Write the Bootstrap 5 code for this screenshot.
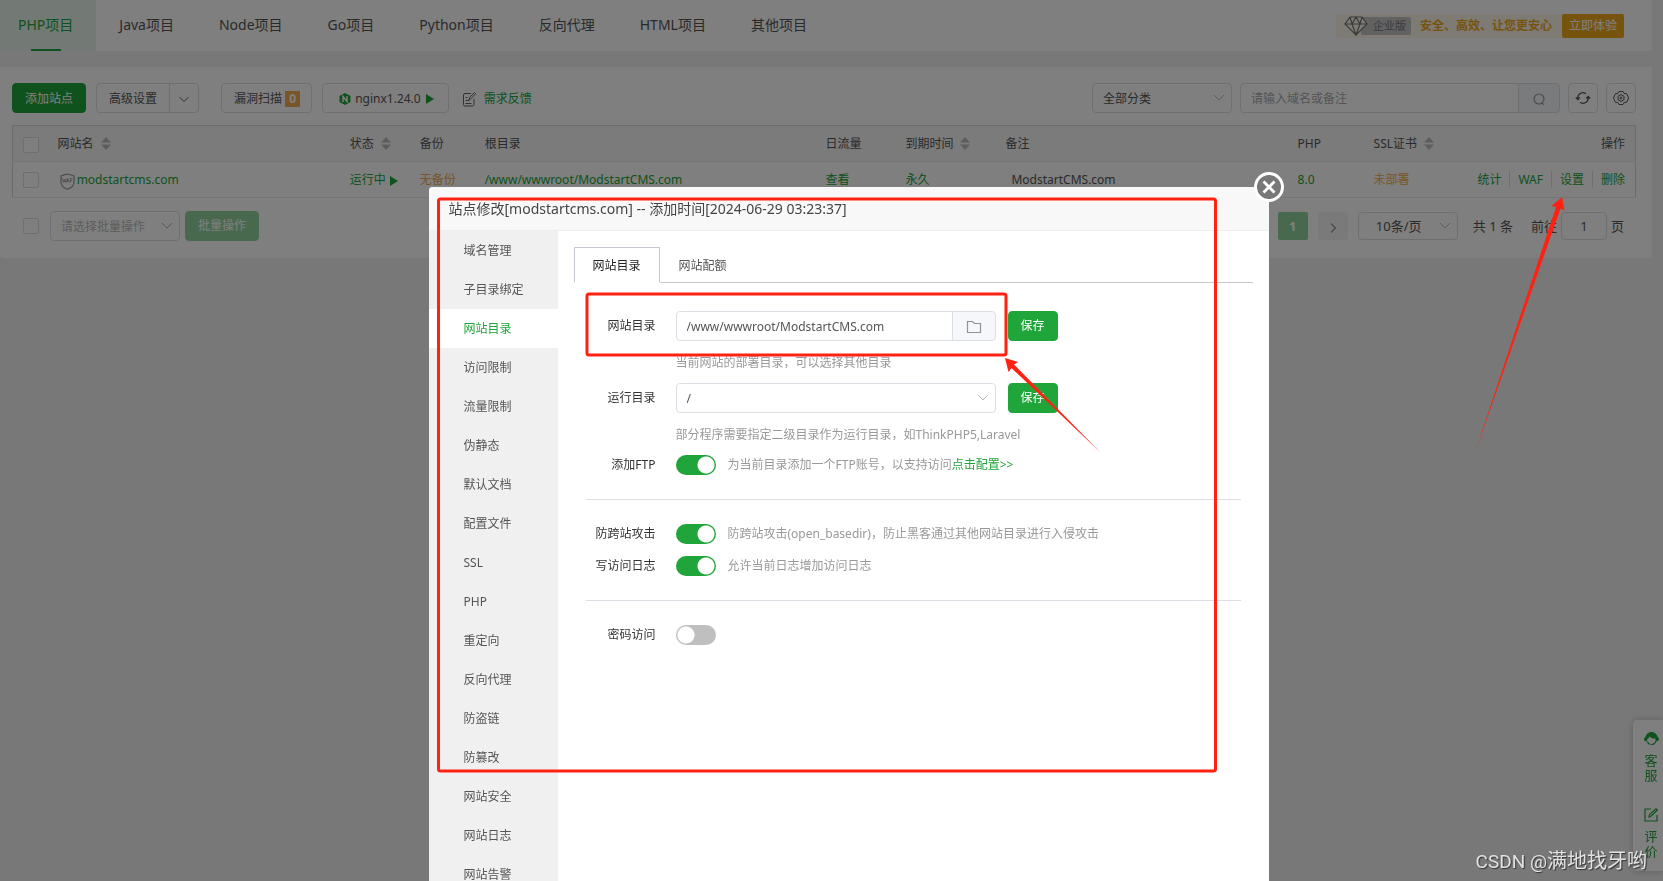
<!DOCTYPE html>
<html lang="zh-CN">
<head>
<meta charset="utf-8">
<meta name="viewport" content="width=device-width, initial-scale=1">
<title>网站管理</title>
<link href="https://cdn.jsdelivr.net/npm/bootstrap@5.3.0/dist/css/bootstrap.min.css" rel="stylesheet">
<style>
:root{--brand:#20a53a;--line:#dcdfe6;--warn:#f0ad4e;}
html,body{height:100%;}
body{font-family:"Noto Sans","Noto Sans CJK SC",sans-serif;font-size:12px;line-height:18px;color:#555;background:#f0f0f0;overflow:hidden;}
a{color:var(--brand);text-decoration:none;}
.page-wrap{padding-right:11px;}
.panel{background:#fff;border-radius:0 0 4px 4px;}
.top-nav{height:51px;}
.top-nav .nav-link{color:#555;font-size:14px;line-height:20px;padding:15px 22px 16px 23px;}
.top-nav .nav-link.active{color:var(--brand);background:#e6f3e8;position:relative;padding-left:18px;padding-right:23px;}
.top-nav .nav-link.active::after{content:"";position:absolute;left:31px;bottom:0;width:30px;height:2px;background:var(--brand);}
.promo{background:#fdf6ea;height:24px;margin-right:28px;border-radius:2px;}
.promo-tag{background:#c4c4c4;color:#777;height:18px;line-height:18px;font-size:11px;padding:0 5px 0 12px;margin-left:-7px;border-radius:2px;}
.promo-text{color:#efa91d;font-weight:700;margin:0 10px 0 9px;}
.btn{--bs-btn-font-size:12px;--bs-btn-line-height:18px;--bs-btn-padding-y:5px;--bs-btn-padding-x:12px;--bs-btn-border-radius:4px;}
.btn-brand{--bs-btn-bg:var(--brand);--bs-btn-color:#fff;--bs-btn-border-color:var(--brand);--bs-btn-hover-bg:#1b9132;--bs-btn-hover-color:#fff;}
.btn-soft{--bs-btn-bg:#90d29d;--bs-btn-color:#fff;--bs-btn-border-color:#90d29d;}
.btn-line{--bs-btn-bg:#fff;--bs-btn-color:#555;--bs-btn-border-color:var(--line);}
.btn-gold{--bs-btn-bg:#efa91d;--bs-btn-color:#fff;--bs-btn-padding-y:2px;--bs-btn-padding-x:6px;--bs-btn-border-radius:2px;}
.btn-square{width:30px;height:30px;padding:0;display:inline-flex;align-items:center;justify-content:center;}
.count-tag{background:var(--warn);color:#fff;font-weight:700;width:15px;height:16px;line-height:16px;display:inline-block;text-align:center;}
.form-control,.form-select{font-size:12px;line-height:18px;padding:6px 10px 4px;border-color:var(--line);border-radius:4px;color:#555;}
.form-control::placeholder{color:#aaa;}
.form-select{background-image:url("data:image/svg+xml,%3csvg xmlns='http://www.w3.org/2000/svg' viewBox='0 0 12 12'%3e%3cpath fill='none' stroke='%23b4b7bd' d='M1 3l5 5 5-5'/%3e%3c/svg%3e");background-position:right 6px center;background-size:12px 12px;}
.form-select.muted:disabled{background-color:#fff;color:#bbb;}
.list-pad{padding:16px 16px 17px 12px;}
.tool-row .btn:not(.btn-square):not(.search-btn){padding-top:6px;padding-bottom:4px;}
.adv-group{margin-left:10px;}
.scan-btn{margin-left:22px;padding-right:11px;}
.nginx-btn{margin-left:10px;padding-left:16px;padding-right:14px;}
.feedback{margin-left:14px;padding-top:2px;}
.cat-select{width:140px;}
.search-group{width:320px;}
.search-btn{width:42px;padding:0;background:#f5f7fa;}
.site-table{table-layout:fixed;border:1px solid #d6d6d6;font-size:12px;margin:12px 0 13px;--bs-table-color:#555;--bs-table-bg:transparent;}
.site-table>:not(caption)>*>*{padding:9px 10px 8px;border-color:#ebebeb;line-height:18px;font-weight:400;white-space:nowrap;}
.site-table thead{background:#f6f6f6;}
.site-table .orange{color:var(--warn);}
.site-table .form-check-input{margin-top:1px;}
.form-check-input{width:16px;height:16px;margin:0;border-color:var(--line);border-radius:2px!important;display:block;box-shadow:none;}
.sorter{display:inline-block;margin-left:7px;vertical-align:-2px;}
.waf{vertical-align:-4px;margin:-2px -1px -2px 2px;}
.note-text{padding-left:6px;}
.ops a+a{border-left:1px solid #ddd;margin-left:8px;padding-left:8px;}
.batch{padding-left:11px;}
.batch-select{width:130px;margin:0 5px 0 11px;}
.pager{font-size:13px;}
.pager .form-select,.pager .form-control,.pager .btn{font-size:13px;height:28px;padding-top:3px;padding-bottom:3px;}
.pager .btn{width:30px;padding:0;border-radius:2px;border:0;}
.pager .next-btn{background:#f4f4f4;margin:0 10px;}
.page-size{width:100px;padding-left:17px;}
.page-jump{width:46px;text-align:center;}
.total{margin:0 18px 0 15px;}
.jump-label{margin-right:4px;}
.side-tools{position:fixed;right:0;bottom:10px;width:30px;height:151px;background:#fff;border-radius:4px 0 0 4px;box-shadow:0 0 6px rgba(0,0,0,.2);z-index:10;padding:12px 2px 0 8px;font-size:13px;line-height:15px;text-align:center;}
.side-tools a{display:block;width:20px;margin-bottom:25px;}
.side-tools svg{display:block;margin:0 auto 7px;}
.side-tools span{display:block;width:13px;margin:0 auto;}
/* site dialog */
.modal-backdrop{height:100%;width:100%;}
.site-modal{overflow:hidden;padding-left:34px;}
.site-modal .modal-dialog{max-width:840px;margin:187px auto 0;}
.site-modal .modal-content{border:0;border-radius:4px;color:#555;}
.site-modal .modal-header{background:#f8f8f8;border-bottom:1px solid #eee;border-radius:4px 4px 0 0;padding:12px 20px 11px;}
.site-modal .modal-title{font-size:14px;line-height:20px;font-weight:400;color:#444;}
.close-ring{position:absolute;right:-15px;top:-15px;width:30px;height:30px;padding:0;border:0;background:none;z-index:3;line-height:0;}
.side-menu{width:129px;background:#f0f0f0;flex:none;}
.side-menu .nav-link{color:#555;padding:11px 0 10px 35px;line-height:18px;border-radius:0;}
.side-menu .nav-link.active{background:#fff;color:var(--brand);}
.site-pane{padding:16px 16px 0;min-width:0;}
.site-tabs{--bs-nav-tabs-border-color:#c8c8d4;--bs-nav-tabs-link-active-border-color:#c8c8d4 #c8c8d4 #fff;--bs-nav-tabs-border-radius:1px;}
.site-tabs .nav-link{color:#555;padding:9px 18px 7px;line-height:18px;}
.site-tabs .nav-link.active{color:#222;}
.site-form{padding:28px 12px 0;}
.field-label{width:70px;flex:none;text-align:right;color:#333;margin-right:20px;}
.field-box{width:320px;}
.folder-btn{width:44px;padding:0;background:#f5f7fa;}
.save-btn{margin-left:12px;}
.hint{color:#999;}
.hint-row{margin:13px 0 11px 90px;}
.switch-row{height:20px;}
.switch-row+.switch-row{margin-top:12px;}
.rule{border-top:1px solid #dcdfe6;opacity:1;color:inherit;margin:24px 0;}
.form-switch{padding:0;margin:0;min-height:0;}
.form-switch .form-check-input{width:40px;height:20px;margin:0;border:0;border-radius:10px!important;background-color:#bfbfbf;background-image:radial-gradient(circle at 10px 10px,#fff 8px,transparent 9px);background-size:40px 20px;background-position:0 0;}
.form-switch .form-check-input:checked{background-color:var(--brand);background-image:radial-gradient(circle at 30px 10px,#fff 8px,transparent 9px);background-position:0 0;}
/* callouts laid over the dialog and list */
.callouts{position:absolute;left:0;top:0;overflow:visible;pointer-events:none;z-index:2;}
.ops-arrow{position:fixed;right:97px;top:197px;z-index:1060;pointer-events:none;}
.watermark{position:fixed;right:16px;bottom:7px;z-index:1070;font-size:20px;line-height:24px;color:#e2e2e2;text-shadow:1px 1px 1px #333;font-family:Roboto,"Noto Sans CJK SC",sans-serif;}
.watermark span{font-size:19px;}
</style>
</head>
<body>
<div class="page-wrap">
  <header class="panel top-nav d-flex justify-content-between align-items-center">
    <nav class="nav flex-nowrap">
      <a class="nav-link active" href="#">PHP项目</a><a class="nav-link" href="#">Java项目</a><a class="nav-link" href="#">Node项目</a><a class="nav-link" href="#">Go项目</a><a class="nav-link" href="#">Python项目</a><a class="nav-link" href="#">反向代理</a><a class="nav-link" href="#">HTML项目</a><a class="nav-link" href="#">其他项目</a>
    </nav>
    <div class="promo d-flex align-items-center ps-2">
      <svg width="24" height="20" viewBox="0 0 24 20" fill="#fdf6ea" stroke="#777" stroke-width="1.2" class="position-relative"><path d="M6 1h12l5 7-11 11L1 8zM1 8h22M6 1l2 7 4 11 4-11 2-7M8 8l4-7 4 7"/></svg>
      <span class="promo-tag">企业版</span>
      <span class="promo-text">安全、高效、让您更安心</span>
      <button class="btn btn-gold" type="button">立即体验</button>
    </div>
  </header>

  <main class="panel list-pad mt-3">
    <div class="d-flex justify-content-between tool-row">
      <div class="d-flex align-items-center">
        <button class="btn btn-brand" type="button">添加站点</button>
        <div class="btn-group adv-group">
          <button class="btn btn-line" type="button">高级设置</button>
          <button class="btn btn-line px-2" type="button" aria-label="更多"><svg width="12" height="12" fill="none" stroke="#666"><path d="M1.500 3l4.500 4.500L10.500 3"/></svg></button>
        </div>
        <button class="btn btn-line scan-btn" type="button">漏洞扫描 <span class="count-tag">0</span></button>
        <button class="btn btn-line nginx-btn d-flex align-items-center" type="button"><svg width="12" height="12" class="me-1"><path d="M6 0l5.500 3v6L6 12 .5 9V3z" fill="#20a53a"/><path d="M4 9V3.500l4 5V3" fill="none" stroke="#fff" stroke-width="1.400"/></svg>nginx1.24.0<svg width="9" height="10" class="ms-1"><path d="M1 0l8 5-8 5z" fill="#20a53a"/></svg></button>
        <a href="#" class="feedback d-flex align-items-center"><svg width="13" height="15" class="me-1" fill="none" stroke="#666"><path d="M8 1.500H2A1.500 1.500 0 00.5 3v9.500A1.500 1.500 0 002 14h7.500a1.500 1.500 0 001.500-1.500V7M2.500 8.500h4M2.500 11.500h6M2.500 5.500h2M6 8l.5-2.500 5-5 1.300 1.300-5 5z"/></svg><span class="ps-1">需求反馈</span></a>
      </div>
      <div class="d-flex gap-2">
        <select class="form-select cat-select" aria-label="分类"><option>全部分类</option></select>
        <div class="input-group search-group">
          <input class="form-control" type="text" placeholder="请输入域名或备注" aria-label="域名或备注">
          <button class="btn btn-line search-btn" type="button" aria-label="搜索"><svg width="14" height="14" fill="none" stroke="#999" stroke-width="1.200"><circle cx="7" cy="7" r="5"/><path d="M10 10.500l2 2.500"/></svg></button>
        </div>
        <button class="btn btn-line btn-square" type="button" aria-label="刷新"><svg width="16" height="16" fill="none" stroke="#555" stroke-width="1.300"><path d="M2.800 9.500V7.500A5.200 5.200 0 0111 3.700M13.200 6.500v2A5.200 5.200 0 015 12.300M.8 7.500l2 2 2-2M11.200 8.500l2-2 2 2"/></svg></button>
        <button class="btn btn-line btn-square" type="button" aria-label="设置"><svg width="16" height="16" fill="none" stroke="#555"><path d="M6 1.500h4l1.200 2 2.300.2 1.800 3.300v2l-1.800 3.300-2.300.2-1.200 2H6l-1.200-2-2.300-.2L.8 9V7l1.700-3.300 2.300-.2z"/><path d="M8 4.500l3 1.800v3.400l-3 1.800-3-1.800V6.300z"/><circle cx="8" cy="8" r="1"/></svg></button>
      </div>
    </div>

    <table class="table site-table">
      <colgroup><col style="width:35px"><col style="width:18%"><col style="width:70px"><col style="width:65px"><col style="width:21%"><col style="width:80px"><col style="width:100px"><col style="width:18%"><col style="width:76px"><col style="width:88px"><col></colgroup>
      <thead><tr>
        <th><input class="form-check-input" type="checkbox" aria-label="全选"></th>
        <th>网站名<svg class="sorter" width="10" height="13" fill="#bbb"><path d="M5 0l5 5.500H0zM5 13l5-5.500H0z"/></svg></th>
        <th>状态<svg class="sorter" width="10" height="13" fill="#bbb"><path d="M5 0l5 5.500H0zM5 13l5-5.500H0z"/></svg></th>
        <th>备份</th><th>根目录</th><th>日流量</th>
        <th>到期时间<svg class="sorter" width="10" height="13" fill="#bbb"><path d="M5 0l5 5.500H0zM5 13l5-5.500H0z"/></svg></th>
        <th>备注</th><th>PHP</th>
        <th>SSL证书<svg class="sorter" width="10" height="13" fill="#bbb"><path d="M5 0l5 5.500H0zM5 13l5-5.500H0z"/></svg></th>
        <th class="text-end">操作</th>
      </tr></thead>
      <tbody><tr>
        <td><input class="form-check-input" type="checkbox" aria-label="选择 modstartcms.com"></td>
        <td><svg width="15" height="17" class="waf" viewBox="0 0 15 17"><path d="M7.500 1L14 3v6c0 3.500-3 6-6.500 7.300C4 15 1 12.500 1 9V3z" fill="none" stroke="#999" stroke-width="1.200"/><path d="M2.500 5.500l1 4 1-3 1 3 .8-4M6.500 9.500l1.300-4 1.200 4M7 8h1.700M10.300 9.500v-4h2M10.300 7.500h2" fill="none" stroke="#999" stroke-width=".9"/></svg> <a href="#">modstartcms.com</a></td>
        <td><a href="#">运行中</a><svg width="9" height="10" class="ms-1"><path d="M0 0l8 5-8 5z" fill="#20a53a"/></svg></td>
        <td class="orange">无备份</td>
        <td><a href="#">/www/wwwroot/ModstartCMS.com</a></td>
        <td><a href="#">查看</a></td><td><a href="#">永久</a></td>
        <td><span class="note-text">ModstartCMS.com</span></td>
        <td><a href="#">8.0</a></td><td class="orange">未部署</td>
        <td class="text-end ops"><a href="#">统计</a><a href="#">WAF</a><a href="#">设置</a><a href="#">删除</a></td>
      </tr></tbody>
    </table>

    <div class="d-flex justify-content-between align-items-center">
      <div class="d-flex align-items-center batch">
        <input class="form-check-input" type="checkbox" aria-label="全选">
        <select class="form-select muted batch-select" disabled aria-label="批量操作"><option>请选择批量操作</option></select>
        <button class="btn btn-soft" type="button">批量操作</button>
      </div>
      <div class="d-flex align-items-center pager">
        <button class="btn btn-soft fw-bold" type="button">1</button>
        <button class="btn next-btn" type="button" aria-label="下一页"><svg width="10" height="12" fill="none" stroke="#999" stroke-width="1.400"><path d="M3 1.500L7.500 6 3 10.500"/></svg></button>
        <select class="form-select page-size" aria-label="每页条数"><option>10条/页</option></select>
        <span class="total">共 1 条</span>
        <label class="jump-label" for="jump">前往</label>
        <input class="form-control page-jump" id="jump" type="text" value="1">
        <span class="ms-1 me-2 pe-1">页</span>
      </div>
    </div>
  </main>
</div>

<aside class="side-tools">
  <a href="#"><svg width="15" height="14" viewBox="0 0 15 14"><path d="M0 7a2 2 0 011.200-1.800C2 2 4.500 0 7.500 0s5.500 2 6.300 5.200A2 2 0 0113.500 9l-1 .2C11.500 12 10 13 8 13H7v-1c2 0 3.500-1 4.500-3V6.500C9 6.800 6.500 6 5.500 4.500 5 6 4 7 3 7.200L3.200 9.500C1 9.500 0 8.500 0 7zM4 9.500C4.800 11 5.800 12 6.500 12L6 13C4.500 12.500 3.500 11.500 3 10z" fill="#20a53a"/></svg><span>客服</span></a>
  <a href="#"><svg width="14" height="14" fill="none" stroke="#20a53a" stroke-width="1.200"><path d="M7 1H1v12h12V7M5 9l.5-2.500L12 .8 13.300 2l-6 6z"/></svg><span>评价</span></a>
</aside>

<div class="modal-backdrop show"></div>

<div class="modal d-block site-modal" tabindex="-1" role="dialog" aria-labelledby="dlgTitle">
  <div class="modal-dialog">
    <div class="modal-content">
      <button class="close-ring" type="button" aria-label="关闭"><svg width="30" height="30" viewBox="0 0 30 30"><circle cx="15" cy="15" r="13.500" fill="#787878" stroke="#fff" stroke-width="3"/><path d="M9.500 9.500l11 11M20.500 9.500l-11 11" stroke="#fff" stroke-width="2.800"/></svg></button>
      <div class="modal-header"><h1 class="modal-title" id="dlgTitle">站点修改[modstartcms.com] -- 添加时间[2024-06-29 03:23:37]</h1></div>
      <div class="d-flex">
        <nav class="nav flex-column side-menu">
          <a class="nav-link" href="#">域名管理</a><a class="nav-link" href="#">子目录绑定</a><a class="nav-link active" href="#">网站目录</a><a class="nav-link" href="#">访问限制</a><a class="nav-link" href="#">流量限制</a><a class="nav-link" href="#">伪静态</a><a class="nav-link" href="#">默认文档</a><a class="nav-link" href="#">配置文件</a><a class="nav-link" href="#">SSL</a><a class="nav-link" href="#">PHP</a><a class="nav-link" href="#">重定向</a><a class="nav-link" href="#">反向代理</a><a class="nav-link" href="#">防盗链</a><a class="nav-link" href="#">防篡改</a><a class="nav-link" href="#">网站安全</a><a class="nav-link" href="#">网站日志</a><a class="nav-link" href="#">网站告警</a>
        </nav>
        <section class="site-pane flex-grow-1">
          <ul class="nav nav-tabs site-tabs">
            <li class="nav-item"><a class="nav-link active" href="#">网站目录</a></li>
            <li class="nav-item"><a class="nav-link" href="#">网站配额</a></li>
          </ul>
          <form class="site-form">
            <div class="d-flex align-items-center">
              <label class="field-label" for="siteDir">网站目录</label>
              <div class="input-group field-box">
                <input class="form-control" id="siteDir" type="text" value="/www/wwwroot/ModstartCMS.com">
                <button class="btn btn-line folder-btn" type="button" aria-label="选择目录"><svg width="16" height="14" fill="none" stroke="#8f939b" stroke-width="1.200"><path d="M1.500 12.500v-11h5l2 2h6v9z"/></svg></button>
              </div>
              <button class="btn btn-brand save-btn" type="button">保存</button>
            </div>
            <div class="hint hint-row">当前网站的部署目录，可以选择其他目录</div>
            <div class="d-flex align-items-center">
              <label class="field-label" for="runDir">运行目录</label>
              <select class="form-select field-box" id="runDir"><option>/</option></select>
              <button class="btn btn-brand save-btn" type="button">保存</button>
            </div>
            <div class="hint hint-row">部分程序需要指定二级目录作为运行目录，如ThinkPHP5,Laravel</div>
            <div class="d-flex align-items-center switch-row">
              <label class="field-label" for="ftp">添加FTP</label>
              <div class="form-check form-switch"><input class="form-check-input" type="checkbox" role="switch" id="ftp" checked></div>
              <span class="hint ms-2 ps-1">为当前目录添加一个FTP账号，以支持访问<a href="#">点击配置&gt;&gt;</a></span>
            </div>
            <hr class="rule">
            <div class="d-flex align-items-center switch-row">
              <label class="field-label" for="basedir">防跨站攻击</label>
              <div class="form-check form-switch"><input class="form-check-input" type="checkbox" role="switch" id="basedir" checked></div>
              <span class="hint ms-2 ps-1">防跨站攻击(open_basedir)，防止黑客通过其他网站目录进行入侵攻击</span>
            </div>
            <div class="d-flex align-items-center switch-row">
              <label class="field-label" for="accessLog">写访问日志</label>
              <div class="form-check form-switch"><input class="form-check-input" type="checkbox" role="switch" id="accessLog" checked></div>
              <span class="hint ms-2 ps-1">允许当前日志增加访问日志</span>
            </div>
            <hr class="rule">
            <div class="d-flex align-items-center switch-row">
              <label class="field-label" for="pwd">密码访问</label>
              <div class="form-check form-switch"><input class="form-check-input" type="checkbox" role="switch" id="pwd"></div>
            </div>
          </form>
        </section>
      </div>
      <svg class="callouts" width="840" height="694" fill="none" stroke="#ff2212" stroke-width="3"><rect x="9.500" y="12" width="777" height="572" rx="2"/><rect x="158" y="107" width="419" height="61" rx="2"/><path d="M576 171l13 4-4 2.500L671 265l-88.500-84-3 4z" fill="#ff2212" stroke="none"/></svg>
    </div>
  </div>
</div>

<svg class="ops-arrow" width="94" height="258" viewBox="1472 197 94 258"><path d="M1562 197l2.500 13.500-4-2L1475 453l81-246-4.500-1z" fill="#ff2212"/></svg>
<div class="watermark"><span>CSDN @</span>满地找牙哟</div>
<script src="https://cdn.jsdelivr.net/npm/bootstrap@5.3.0/dist/js/bootstrap.bundle.min.js"></script>
</body>
</html>
